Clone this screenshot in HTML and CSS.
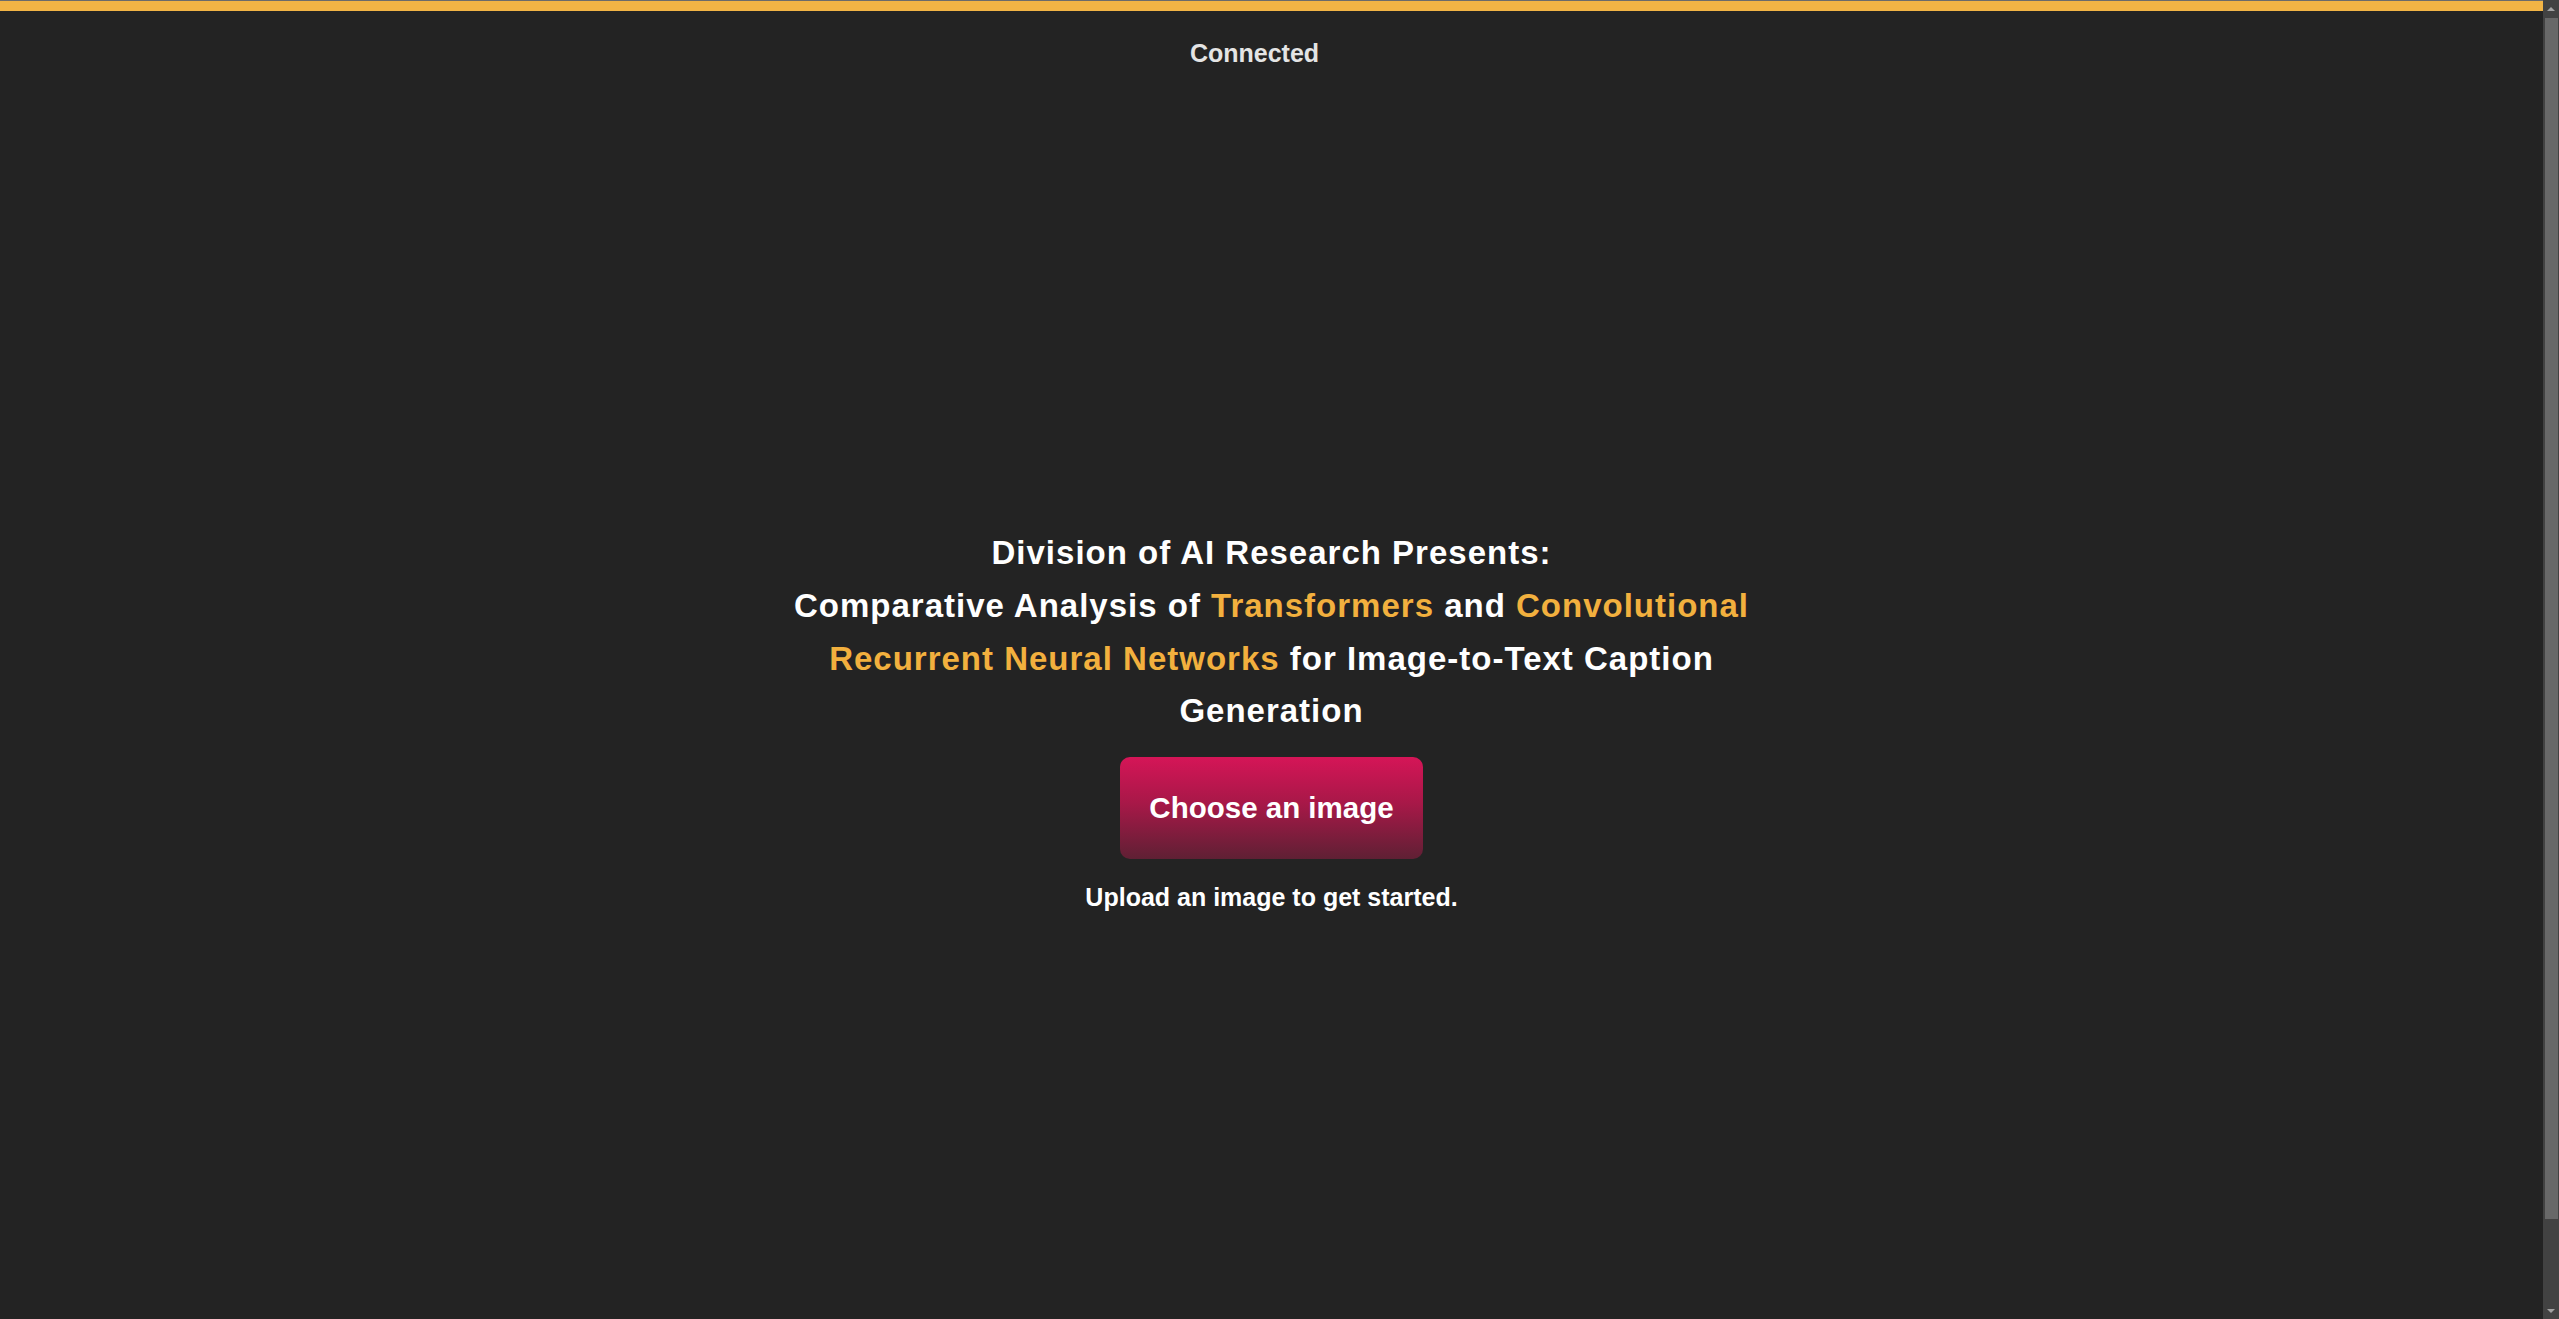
FILE: index.html
```html
<!DOCTYPE html>
<html lang="en">
<head>
<meta charset="utf-8">
<title>Image-to-Text Caption Generation</title>
<link rel="stylesheet" href="styles.css">
</head>
<body>
  <div class="topbar"></div>
  <header class="status">
    <span class="status-text">Connected</span>
  </header>
  <main class="stage">
    <h1 class="title">
      Division of AI Research Presents:<br>
      Comparative Analysis of <span class="hl">Transformers</span> and <span class="hl">Convolutional</span> <span class="hl">Recurrent Neural Networks</span> for Image-to-Text Caption Generation
    </h1>
    <label class="upload-btn">Choose an image</label>
    <p class="hint">Upload an image to get started.</p>
  </main>
  <div class="scrollbar" aria-hidden="true">
    <div class="sb-btn"><span class="sb-arrow-up"></span></div>
    <div class="sb-track"><div class="sb-thumb"></div></div>
    <div class="sb-btn"><span class="sb-arrow-down"></span></div>
  </div>
</body>
</html>
```

FILE: styles.css
```css
html {
  background: #232323;
  overflow: hidden;
}
body {
  margin: 0;
  padding-right: 16px;
  background: #232323;
  font-family: "Liberation Sans", Arial, sans-serif;
  color: #ffffff;
}
.topbar {
  height: 10px;
  background: #f2b445;
  border-top: 1px solid #6b6b6b;
}
.status {
  display: flex;
  justify-content: center;
  padding-top: 28px;
  padding-right: 34px;
}
.status-text {
  font-size: 25px;
  font-weight: bold;
  line-height: 28px;
  color: #e4e4e4;
}
.stage {
  min-height: calc(100vh - 14px);
  display: flex;
  flex-direction: column;
  align-items: center;
  justify-content: center;
}
.title {
  margin: 0 0 19px;
  max-width: 1000px;
  text-align: center;
  font-size: 33px;
  line-height: 52.8px;
  letter-spacing: 1px;
  font-weight: bold;
  color: #ffffff;
}
.hl {
  color: #f2b03e;
}
.upload-btn {
  display: inline-block;
  padding: 34px 29px;
  font-size: 29.5px;
  line-height: 34px;
  font-weight: bold;
  color: #ffffff;
  border-radius: 10px;
  background: linear-gradient(to bottom, #d51557 0%, #a81848 45%, #5f2034 100%);
  cursor: pointer;
}
.hint {
  margin: 24px 0 0;
  font-size: 25px;
  font-weight: bold;
  line-height: 29px;
  color: #ffffff;
}
.scrollbar {
  position: fixed;
  top: 0;
  right: 0;
  width: 16px;
  height: 100vh;
  background: #424242;
  display: flex;
  flex-direction: column;
}
.sb-btn {
  height: 17px;
  display: flex;
  align-items: center;
  justify-content: center;
}
.sb-arrow-up {
  width: 0;
  height: 0;
  border-left: 4px solid transparent;
  border-right: 4px solid transparent;
  border-bottom: 4px solid #a3a3a3;
}
.sb-arrow-down {
  width: 0;
  height: 0;
  border-left: 4px solid transparent;
  border-right: 4px solid transparent;
  border-top: 4px solid #a3a3a3;
}
.sb-track {
  flex: 1;
  padding: 1px 1px 0 2px;
}
.sb-thumb {
  height: 1201px;
  background: #686868;
}
```
